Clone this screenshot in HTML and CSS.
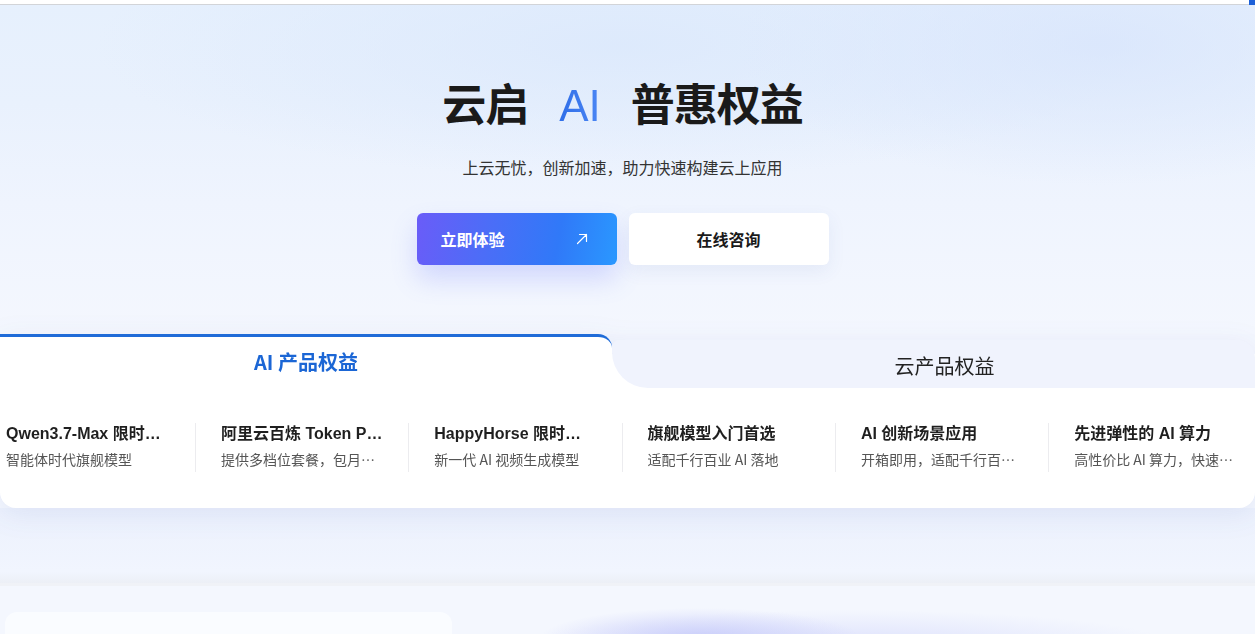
FILE: index.html
```html
<!DOCTYPE html>
<html lang="zh-CN">
<head>
<meta charset="utf-8">
<title>云启 AI 普惠权益</title>
<link rel="stylesheet" href="styles.css">
</head>
<body>
<div class="page">
  <div class="topbar"><span class="topbar-mark"></span></div>
  <section class="hero">
    <h1 class="hero-title">云启<span class="hero-ai">AI</span>普惠权益</h1>
    <p class="hero-sub">上云无忧，创新加速，助力快速构建云上应用</p>
    <div class="hero-actions">
      <a class="btn btn-primary" href="#">
        <span>立即体验</span>
        <svg class="btn-arrow" viewBox="0 0 14 14" width="14" height="14"><path d="M2.5 11.5 L11.5 2.5 M4.5 2.5 H11.5 V9.5" fill="none" stroke="#fff" stroke-width="1.2" stroke-linecap="round" stroke-linejoin="round"/></svg>
      </a>
      <a class="btn btn-secondary" href="#">在线咨询</a>
    </div>
  </section>

  <section class="benefits">
    <div class="tabs">
      <div class="tab tab-active">AI 产品权益</div>
      <div class="tab tab-idle">云产品权益</div>
    </div>
    <div class="panel">
      <div class="item item-first">
        <div class="item-title">Qwen3.7-Max 限时特惠活动</div>
        <div class="item-desc">智能体时代旗舰模型</div>
      </div>
      <div class="item">
        <div class="item-title">阿里云百炼 Token Plan 套餐</div>
        <div class="item-desc">提供多档位套餐，包月畅享</div>
      </div>
      <div class="item">
        <div class="item-title">HappyHorse 限时特惠</div>
        <div class="item-desc">新一代 AI 视频生成模型</div>
      </div>
      <div class="item">
        <div class="item-title">旗舰模型入门首选</div>
        <div class="item-desc">适配千行百业 AI 落地</div>
      </div>
      <div class="item">
        <div class="item-title">AI 创新场景应用</div>
        <div class="item-desc">开箱即用，适配千行百业场景</div>
      </div>
      <div class="item">
        <div class="item-title">先进弹性的 AI 算力</div>
        <div class="item-desc">高性价比 AI 算力，快速部署</div>
      </div>
    </div>
  </section>

  <div class="gap-band"></div>

  <section class="next">
    <div class="next-glow"></div>
    <div class="next-card"></div>
  </section>
</div>
</body>
</html>
```

FILE: styles.css
```css
html, body {
  margin: 0;
  padding: 0;
  overflow: hidden;
}
body {
  font-family: "Liberation Sans", "Noto Sans CJK SC", sans-serif;
  background: #f3f6fe;
  color: #1f1f1f;
}
.page {
  width: 1255px;
  height: 634px;
  overflow: hidden;
  position: relative;
  background: #f3f6fe;
}
.topbar {
  height: 4px;
  background: #fff;
  border-bottom: 1px solid #d2d4d8;
  position: relative;
}
.topbar-mark {
  position: absolute;
  right: 0;
  top: 0;
  width: 6px;
  height: 5px;
  background: #1b5fd8;
}
.hero {
  padding: 67px 10px 69px 0;
  text-align: center;
  background:
    radial-gradient(ellipse 520px 200px at 1100px 40px, rgba(216,229,252,0.8), rgba(216,229,252,0) 70%),
    radial-gradient(ellipse 700px 180px at 620px 40px, rgba(220,233,252,0.9), rgba(220,233,252,0) 75%),
    linear-gradient(180deg, #e6f0fd 0%, #e9f1fd 30%, #eff4fe 60%, #f4f7fe 100%);
}
.hero-title {
  margin: 0;
  font-family: "Noto Sans CJK SC", sans-serif;
  font-size: 44px;
  line-height: 60px;
  font-weight: 700;
  color: #1a1a1a;
  letter-spacing: -1px;
}
.hero-ai {
  font-family: "Liberation Sans", "Noto Sans CJK SC", sans-serif;
  font-weight: 400;
  margin: 0 30px 0 31px;
  letter-spacing: 0;
  background: linear-gradient(90deg, #2f6ee8, #4b86f4);
  -webkit-background-clip: text;
  background-clip: text;
  color: transparent;
}
.hero-sub {
  margin: 20px 0 0;
  font-family: "Noto Sans CJK SC", sans-serif;
  font-size: 16px;
  line-height: 22px;
  color: #333;
}
.hero-actions {
  margin-top: 35px;
  display: flex;
  justify-content: center;
  gap: 12px;
}
.btn {
  box-sizing: border-box;
  width: 200px;
  height: 52px;
  border-radius: 6px;
  display: flex;
  align-items: center;
  text-decoration: none;
  font-family: "Noto Sans CJK SC", sans-serif;
  font-size: 16px;
  font-weight: 700;
}
.btn-primary {
  justify-content: space-between;
  padding: 0 28px 0 24px;
  color: #fff;
  background: linear-gradient(100deg, #6a5cf8 0%, #4c6df7 35%, #3079f8 70%, #2a98ff 100%);
  box-shadow: 0 14px 26px rgba(95, 110, 250, 0.22);
}
.btn-arrow {
  display: block;
}
.btn-secondary {
  justify-content: center;
  color: #1a1a1a;
  background: #fff;
  box-shadow: 0 6px 18px rgba(60, 90, 170, 0.08);
}

.benefits {
  position: relative;
  filter: drop-shadow(0 6px 14px rgba(40, 70, 150, 0.08));
}
.tabs {
  display: flex;
  height: 54px;
  background: linear-gradient(180deg, rgba(255,255,255,0) 0, rgba(255,255,255,0) 20px, #fff 20px, #fff 100%);
}
.tab {
  box-sizing: border-box;
  display: flex;
  align-items: center;
  justify-content: center;
  font-family: "Noto Sans CJK SC", sans-serif;
  font-size: 20px;
}
.tab-active {
  width: 612px;
  flex: none;
  background: #fff;
  border-top: 3px solid #1f6bd8;
  border-top-right-radius: 14px;
  color: #1b66d5;
  font-weight: 700;
  padding-bottom: 3px;
}
.tab-idle {
  flex: 1;
  margin-top: 6px;
  background: #f0f3fd;
  border-bottom-left-radius: 36px;
  border-top-left-radius: 8px;
  border-top-right-radius: 18px;
  color: #222;
  font-weight: 400;
  padding-left: 22px;
  padding-top: 2px;
}
.panel {
  display: flex;
  background: #fff;
  padding: 35px 0 36px;
  border-radius: 0 0 16px 16px;
  overflow: hidden;
}
.item {
  box-sizing: border-box;
  flex: none;
  width: 213.3px;
  padding: 0 25px 0 25px;
  border-left: 1px solid #ececef;
  height: 49px;
}
.item-first {
  width: 195px;
  padding-left: 6px;
  border-left: none;
}
.item-title {
  font-size: 16px;
  line-height: 22px;
  font-weight: 700;
  color: #1f1f1f;
  white-space: nowrap;
  overflow: hidden;
  text-overflow: ellipsis;
  max-width: 165px;
}
.item-desc {
  margin-top: 4px;
  font-family: "Noto Sans CJK SC", sans-serif;
  font-size: 14px;
  line-height: 20px;
  color: #555;
  white-space: nowrap;
  overflow: hidden;
  text-overflow: ellipsis;
  max-width: 163px;
}

.gap-band {
  height: 75px;
  background: linear-gradient(180deg, #ecf1fd 0%, #f1f5fe 85%, #eceff6 100%);
}
.next {
  position: relative;
  height: 60px;
  border-top: 3px solid #f0f2f7;
  background: #f4f7fe;
  padding: 26px 0 0 5px;
  box-sizing: border-box;
}
.next-card {
  width: 447px;
  height: 60px;
  background: #fafcff;
  border-radius: 12px 12px 0 0;
  position: relative;
}
.next-glow {
  position: absolute;
  left: 470px;
  top: 0;
  width: 700px;
  height: 60px;
  background:
    radial-gradient(ellipse 160px 30px at 230px 52px, rgba(200, 204, 250, 0.95), rgba(214, 218, 252, 0) 100%),
    radial-gradient(ellipse 320px 34px at 380px 58px, rgba(216, 220, 252, 0.8), rgba(226, 230, 252, 0) 100%);
}
```
